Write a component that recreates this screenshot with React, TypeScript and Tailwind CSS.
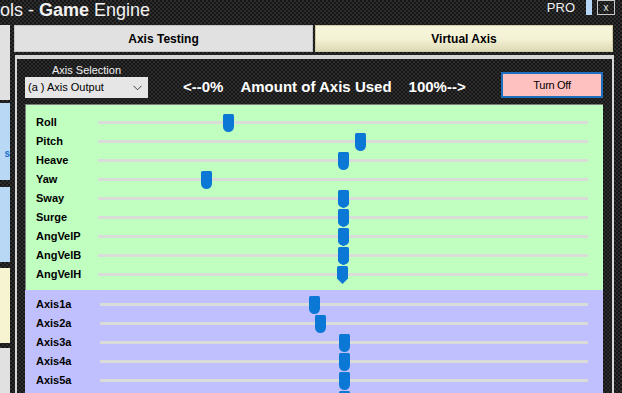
import React from "react";

type Row = { name: string; c: number; shape: "round" | "mid" | "point" };

const green: Row[] = [
  { name: "Roll", c: 228.5, shape: "round" },
  { name: "Pitch", c: 360.5, shape: "round" },
  { name: "Heave", c: 343.5, shape: "round" },
  { name: "Yaw", c: 206.5, shape: "round" },
  { name: "Sway", c: 343.5, shape: "mid" },
  { name: "Surge", c: 343.5, shape: "mid" },
  { name: "AngVelP", c: 343.5, shape: "mid" },
  { name: "AngVelB", c: 343.5, shape: "mid" },
  { name: "AngVelH", c: 342.5, shape: "point" },
];

const purple: Row[] = [
  { name: "Axis1a", c: 314.5, shape: "round" },
  { name: "Axis2a", c: 320.5, shape: "round" },
  { name: "Axis3a", c: 344.5, shape: "round" },
  { name: "Axis4a", c: 344.5, shape: "round" },
  { name: "Axis5a", c: 344.5, shape: "round" },
  { name: "", c: 344.5, shape: "round" },
];

const paths: Record<Row["shape"], string> = {
  round: "M0 1.5 Q0 0 1.5 0 H9.5 Q11 0 11 1.5 V12.5 A5.5 5.5 0 0 1 0 12.5 Z",
  mid: "M0 1.5 Q0 0 1.5 0 H9.5 Q11 0 11 1.5 V13.5 Q11 15 9 16.5 L6.5 17.8 Q5.5 18.3 4.5 17.8 L2 16.5 Q0 15 0 13.5 Z",
  point: "M0 1.5 Q0 0 1.5 0 H9.5 Q11 0 11 1.5 V12.5 L5.5 18 L0 12.5 Z",
};

function Thumb({ left, shape }: { left: number; shape: Row["shape"] }) {
  return (
    <svg
      className="absolute top-[-7px]"
      style={{ left: `${left}px` }}
      width="11"
      height="18"
      viewBox="0 0 11 18"
    >
      <path d={paths[shape]} fill="#0b78d6" />
    </svg>
  );
}

function SliderRow({ row, labelW, start }: { row: Row; labelW: string; start: number }) {
  return (
    <div className="flex h-[19px] items-center">
      <div className={`${labelW} shrink-0 text-[11px] font-bold leading-none text-black`}>{row.name}</div>
      <div className="relative h-[3px] flex-1 bg-[#d9dcd9]">
        <Thumb left={row.c - 5.5 - start} shape={row.shape} />
      </div>
    </div>
  );
}

export default function App() {
  return (
    <div
      className="relative h-[393px] w-[622px] overflow-hidden bg-[#1d1d1d] bg-[image:repeating-conic-gradient(#2d2d2d_0_25%,#161616_0_50%)] bg-[length:4px_4px] text-black"
      style={{ fontFamily: '"Liberation Sans", Arial, sans-serif' }}
    >
      {/* top bar */}
      <div className="flex h-[25px] items-start">
        <div className="text-[18px] leading-[20px] text-[#f2f2f2]">
          ols - <span className="font-bold">Game</span> Engine
        </div>
        <div className="ml-auto mr-[7px] flex items-start">
          <div className="mt-[1px] text-[13px] leading-[14px] text-[#f0f0f0]">PRO</div>
          <div className="ml-[11px] h-[15px] w-[6px] bg-[#b7d7f7]" />
          <div className="ml-[5px] flex h-[15px] w-[18px] items-center justify-center border border-[#c8c8c8] text-[10px] leading-none text-[#e8e8e8]">
            x
          </div>
        </div>
      </div>

      {/* body */}
      <div className="flex">
        {/* left strip */}
        <div className="flex w-[10px] shrink-0 flex-col">
          <div className="h-[75px] bg-[#e1e1e1]" />
          <div className="mt-[3px] flex h-[77px] items-center justify-end overflow-hidden bg-[#b9d8f6]">
            <span className="mt-[25px] text-[10px] font-bold leading-none text-[#1d6fd0]">s</span>
          </div>
          <div className="mt-[7px] h-[75px] bg-[#b9d8f6]" />
          <div className="mt-[6px] h-[75px] bg-[#f7f4d2]" />
          <div className="mt-[5px] h-[60px] bg-[#e1e1e1]" />
        </div>

        {/* main */}
        <div className="ml-[4px] flex w-[600px] shrink-0 flex-col">
          {/* tabs */}
          <div className="flex h-[27px] gap-[2px]">
            <div className="flex w-[299px] items-center justify-center border border-[#c4c4c4] bg-[#e1e1e1] text-[12px] font-bold">
              Axis Testing
            </div>
            <div className="flex w-[298px] items-center justify-center border border-[#cfcca4] bg-gradient-to-b from-[#f7f5d9] via-[#f5f3d6] to-[#dcdab5] text-[12px] font-bold">
              Virtual Axis
            </div>
          </div>

          {/* tab page */}
          <div className="ml-[1px] mt-[3px] w-[599px] bg-[#d6d6d6] px-[2px] pt-[4px]">
            <div className="h-[340px] bg-[#1d1d1d] bg-[image:repeating-conic-gradient(#2d2d2d_0_25%,#161616_0_50%)] bg-[length:4px_4px]">
              {/* header */}
              <div className="flex h-[45px] items-start">
                <div className="ml-[8px] flex w-[123px] flex-col">
                  <div className="mt-[5px] h-[13px] text-center text-[11px] leading-[13px] text-[#f0f0f0]">
                    Axis Selection
                  </div>
                  <div className="flex h-[21px] items-center bg-[#e6e6e6] pl-[3px] pr-[6px] text-[11px] text-black">
                    <span>(a ) Axis Output</span>
                    <svg className="ml-auto" width="9" height="6" viewBox="0 0 9 6">
                      <polyline points="0.5,0.8 4.5,4.8 8.5,0.8" fill="none" stroke="#444" strokeWidth="1" />
                    </svg>
                  </div>
                </div>
                <div className="ml-[35px] mt-[19px] flex h-[17px] items-center text-[15px] font-bold leading-[17px] text-white">
                  <span>&lt;--0%</span>
                  <span className="ml-[17px]">Amount of Axis Used</span>
                  <span className="ml-[17px]">100%--&gt;</span>
                </div>
                <div className="ml-auto mr-[9px] mt-[13px] flex h-[26px] w-[102px] items-center justify-center border-2 border-[#1f6fbf] bg-[#ffc0c0] text-[11px] tracking-[-0.3px] text-black">
                  Turn Off
                </div>
              </div>

              {/* green panel */}
              <div className="ml-[8px] w-[578px] border-l border-t border-[#7d7d7d] bg-[#c0ffc0] pb-[6px] pl-[10px] pr-[15px] pt-[8px]">
                {green.map((r) => (
                  <SliderRow key={r.name} row={r} labelW="w-[62px]" start={98} />
                ))}
              </div>
              {/* purple panel */}
              <div className="ml-[8px] h-[120px] w-[578px] bg-[#c0c0ff] pl-[11px] pr-[15px] pt-[5px]">
                {purple.map((r, i) => (
                  <SliderRow key={i} row={r} labelW="w-[64px]" start={100} />
                ))}
              </div>
            </div>
          </div>
        </div>
      </div>
    </div>
  );
}
